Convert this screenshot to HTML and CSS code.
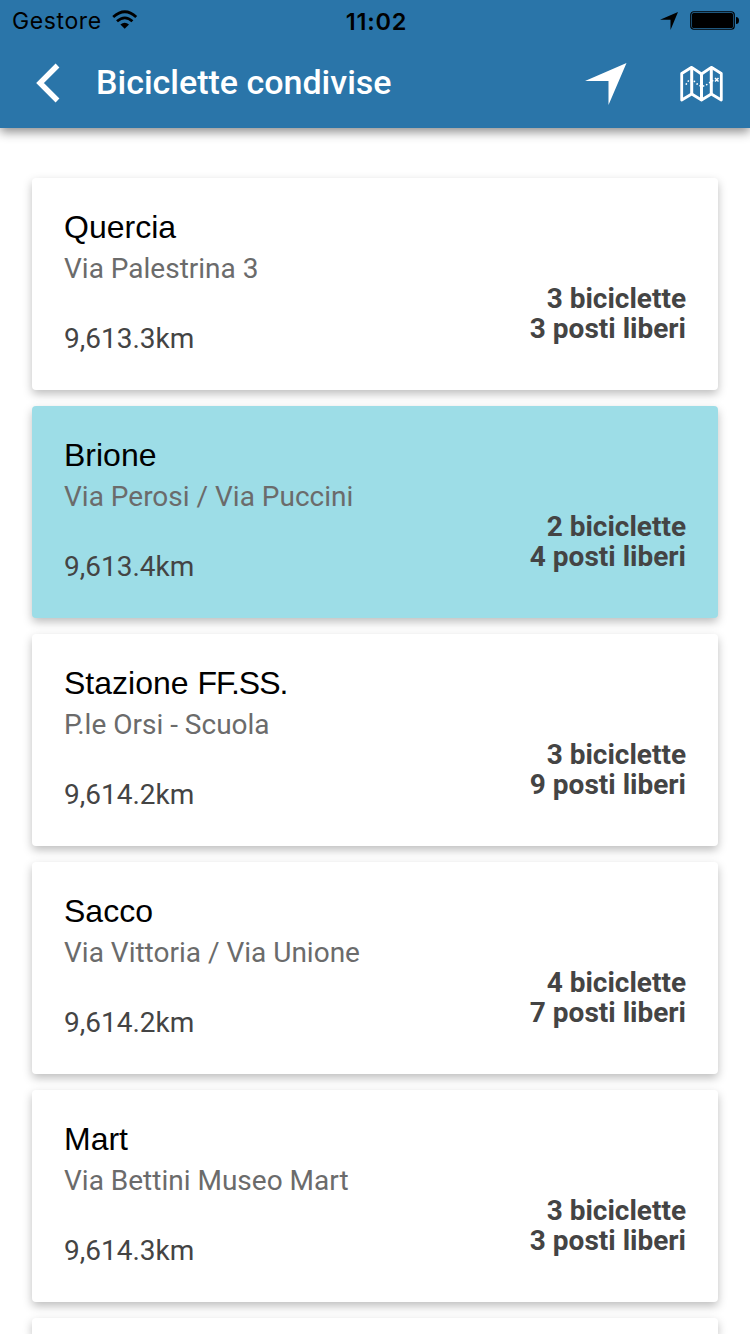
FILE: index.html
```html
<!DOCTYPE html>
<html lang="it">
<head>
<meta charset="utf-8">
<title>Biciclette condivise</title>
<link rel="stylesheet" href="styles.css">
</head>
<body>
<header class="header">
  <div class="status">
    <div class="carrier"><span class="carrier-name">Gestore</span>
      <svg class="wifi" width="26" height="20" viewBox="0 0 26 20"><g fill="none" stroke="#000" stroke-width="2.8"><path d="M1.2 7Q13 -3.4 24.2 7"/><path d="M5 11.3Q13 4.4 20.4 11.3"/></g><path d="M8.4 14.5Q12.7 11.2 17 14.5L12.7 18.8Z"/></svg>
    </div>
    <time class="clock">11:02</time>
    <div class="indicators">
      <svg width="18" height="18" viewBox="0 0 18 18"><path d="M18 0L10.5 18V7.8H0Z"/></svg>
      <svg class="battery" width="50" height="20" viewBox="0 0 50 20"><rect x=".75" y=".75" width="43.5" height="17.5" rx="3" fill="none" stroke="#000" stroke-width="1.2"/><rect x="2" y="2" width="41" height="15" rx="1.5"/><path d="M46 6Q49 6 49 9.5T46 13Z"/></svg>
    </div>
  </div>
  <div class="toolbar">
    <svg class="back" width="26" height="42" viewBox="0 0 26 42"><path d="M23.5 2.5L6 20L23.5 37.5" fill="none" stroke="#fff" stroke-width="5.4"/></svg>
    <h1 class="title">Biciclette condivise</h1>
    <svg class="locate" width="42" height="42" viewBox="0 0 42 42"><path d="M41.5 0L23.5 42V18H0Z" fill="#fff"/></svg>
    <svg class="map" width="44" height="38" viewBox="0 0 44 38"><g fill="none" stroke="#fff" stroke-linejoin="round"><path stroke-width="2.8" d="M1.7 8.5L11.7 2.3L21.5 9L31.3 2.3L41.3 8.5V35L31.3 29L21.5 35L11.7 29L1.7 35Z"/><path stroke-width="3" d="M11.7 2V29M21.5 8.5V35.5M31.3 2V29"/><path stroke-width="1.7" stroke-linecap="round" stroke-dasharray=".1 3.4" d="M6.3 19L8.7 15.5Q11.7 13.5 15 17Q21.5 24 27.5 19L33 15.5"/><path stroke-width="1.5" d="M35 13L38.5 16.5M38.5 13L35 16.5"/></g></svg>
  </div>
</header>
<main class="stations">
  <article class="card"><div><h2 class="name">Quercia</h2><p class="address">Via Palestrina 3</p><p class="distance">9,613.3km</p></div><p class="availability">3 biciclette<br>3 posti liberi</p></article>
  <article class="card card-selected"><div><h2 class="name">Brione</h2><p class="address">Via Perosi / Via Puccini</p><p class="distance">9,613.4km</p></div><p class="availability">2 biciclette<br>4 posti liberi</p></article>
  <article class="card"><div><h2 class="name">Stazione <span class="acronym">FF.SS.</span></h2><p class="address">P.le Orsi - Scuola</p><p class="distance">9,614.2km</p></div><p class="availability">3 biciclette<br>9 posti liberi</p></article>
  <article class="card"><div><h2 class="name">Sacco</h2><p class="address">Via Vittoria / Via Unione</p><p class="distance">9,614.2km</p></div><p class="availability">4 biciclette<br>7 posti liberi</p></article>
  <article class="card"><div><h2 class="name">Mart</h2><p class="address">Via Bettini Museo Mart</p><p class="distance">9,614.3km</p></div><p class="availability">3 biciclette<br>3 posti liberi</p></article>
  <article class="card card-peek"></article>
</main>
</body>
</html>
```
FILE: styles.css
```css
* { box-sizing: border-box; }
body { margin: 0; height: 1334px; overflow: hidden; background: #fff; font-family: Roboto, sans-serif; }
h1, h2, p { margin: 0; font-weight: 400; }
svg { display: block; flex: none; }
.header { height: 128px; background: #2a75a9; box-shadow: 0 4px 10px rgba(0,0,0,.45); }
.status { height: 40px; padding-top: 1px; display: grid; grid-template-columns: 1fr auto 1fr; align-items: center; font-family: Inter, sans-serif; color: #000; }
.carrier { display: flex; align-items: center; gap: 10px; padding-left: 12px; font-size: 23px; }
.carrier-name { padding-top: 1px; letter-spacing: .6px; }
.wifi { margin-top: -1px; }
.clock { padding: 1px 0 0 3px; font-size: 23.5px; font-weight: 600; letter-spacing: .8px; }
.indicators { display: flex; align-items: center; justify-content: flex-end; gap: 12px; padding-right: 10px; }
.toolbar { height: 88px; display: flex; align-items: center; padding: 0 26px 0 34px; }
.title { flex: 1; margin-left: 36px; padding-bottom: 5px; font-size: 34px; line-height: 40px; font-weight: 500; color: #fff; }
.locate { margin-right: 53px; }
.stations { display: flex; flex-direction: column; gap: 16px; padding: 50px 32px 0; }
.card { flex: none; height: 212px; padding: 29px 32px; display: flex; justify-content: space-between; border-radius: 4px; background: #fff; box-shadow: 0 4px 10px rgba(0,0,0,.26); color: #444; font-size: 28px; }
.card-selected { background: #9ddde7; }
.card-peek { height: 16px; padding: 0; border-radius: 4px 4px 0 0; }
.name { font-family: "Liberation Sans", Arial, sans-serif; font-size: 32px; line-height: 40px; color: #000; }
.acronym { letter-spacing: -1px; }
.address { margin-top: 2px; line-height: 40px; color: #6b6b6b; }
.distance { margin-top: 30px; line-height: 40px; }
.availability { margin-top: 77px; line-height: 30px; font-weight: 700; text-align: right; }
```
